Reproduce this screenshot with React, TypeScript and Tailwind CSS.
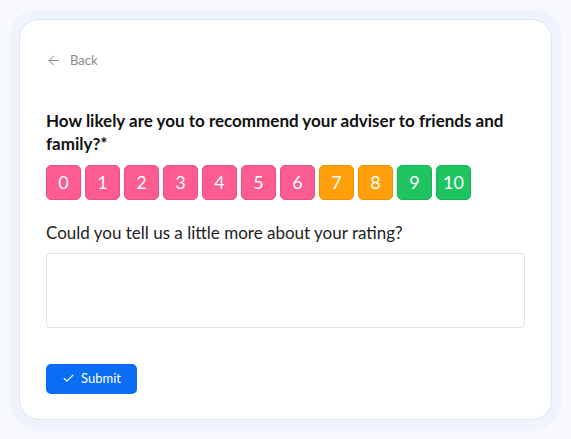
import { ArrowLeft, Check } from "lucide-react";

const SCORES = [0, 1, 2, 3, 4, 5, 6, 7, 8, 9, 10];

function scoreClass(n: number) {
  if (n <= 6) return "bg-[#fc5c8f] border-[#ec4f82]";
  if (n <= 8) return "bg-[#ffa00a] border-[#ef9200]";
  return "bg-[#1ec460] border-[#16b553]";
}

export default function App() {
  return (
    <div className="min-h-screen bg-[#f8f9fc] p-[10px] font-['Lato',sans-serif]">
      <div className="rounded-[26px] bg-[#eef3fc] p-[9px]">
        <div className="rounded-[20px] border border-[#dfe7f5] bg-white px-[26px] pt-[31px] pb-[25px]">
          <button className="flex items-center gap-[9px] text-[13px] text-[#8a8a8a]">
            <ArrowLeft size={15} strokeWidth={1.6} />
            Back
          </button>

          <h1 className="mt-[38px] text-[17px] font-bold leading-[23px] text-[#111]">
            How likely are you to recommend your adviser to friends and family?*
          </h1>

          <div className="mt-[10px] flex gap-[4px]">
            {SCORES.map((n) => (
              <button
                key={n}
                className={`flex h-[35px] w-[35px] items-center justify-center rounded-[5px] border text-[18px] text-white ${scoreClass(n)}`}
              >
                {n}
              </button>
            ))}
          </div>

          <p className="mt-[21px] text-[17px] leading-[24px] text-[#222]">
            Could you tell us a little more about your rating?
          </p>

          <textarea className="mt-[8px] block h-[75px] w-full resize-none rounded-[4px] border border-[#dae4ee] outline-none" />

          <button className="mt-[36px] flex h-[30px] w-[91px] items-center justify-center gap-[6px] rounded-[5px] bg-[#0b6cf4] text-[13px] text-white">
            <Check size={13} strokeWidth={2} />
            Submit
          </button>
        </div>
      </div>
    </div>
  );
}
